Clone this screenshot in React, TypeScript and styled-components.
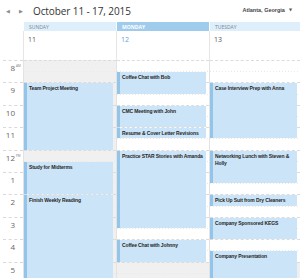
import React from "react";
import styled, { createGlobalStyle } from "styled-components";

const HOUR = 22.4;
const FIRST_HOUR = 8;
const HOURS = [8, 9, 10, 11, 12, 1, 2, 3, 4, 5];

interface CalEvent {
  title: string;
  start: number;
  end: number;
}

interface Day {
  name: string;
  date: number;
  today?: boolean;
  weekend?: boolean;
  events: CalEvent[];
}

const days: Day[] = [
  {
    name: "Sunday",
    date: 11,
    weekend: true,
    events: [
      { title: "Team Project Meeting", start: 9, end: 12 },
      { title: "Study for Midterms", start: 12.5, end: 14 },
      { title: "Finish Weekly Reading", start: 14, end: 18 },
    ],
  },
  {
    name: "Monday",
    date: 12,
    today: true,
    events: [
      { title: "Coffee Chat with Bob", start: 8.5, end: 9.5 },
      { title: "CMC Meeting with John", start: 10, end: 11 },
      { title: "Resume & Cover Letter Revisions", start: 11, end: 11.5 },
      { title: "Practice STAR Stories with Amanda", start: 12, end: 15.5 },
      { title: "Coffee Chat with Johnny", start: 16, end: 17 },
    ],
  },
  {
    name: "Tuesday",
    date: 13,
    events: [
      { title: "Case Interview Prep with Anna", start: 9, end: 11.5 },
      { title: "Networking Lunch with Steven & Holly", start: 12, end: 13.5 },
      { title: "Pick Up Suit from Dry Cleaners", start: 14, end: 14.5 },
      { title: "Company Sponsored KEGS", start: 15, end: 16 },
      { title: "Company Presentation", start: 16.5, end: 18 },
    ],
  },
];

const GlobalStyle = createGlobalStyle`
  html, body {
    margin: 0;
    padding: 0;
    background: #fff;
  }
  body {
    font-family: "Open Sans", "Liberation Sans", sans-serif;
  }
`;

const Page = styled.div`
  width: 300px;
  height: 278px;
  overflow: hidden;
  background: #fff;
`;

const Toolbar = styled.div`
  height: 22px;
  display: flex;
  align-items: center;
  padding-left: 6px;
  padding-right: 8px;
`;

const Arrow = styled.span`
  font-family: "DejaVu Sans", sans-serif;
  font-size: 5px;
  color: #8a8a8a;
  width: 13px;
  line-height: 1;
`;

const Title = styled.h1`
  margin: 0 0 0 1px;
  font-size: 10px;
  font-weight: 400;
  color: #333;
  letter-spacing: -0.1px;
`;

const Location = styled.div`
  margin-left: auto;
  display: flex;
  align-items: center;
  gap: 4px;
  font-family: "Liberation Sans", sans-serif;
  font-size: 5.5px;
  font-weight: 700;
  color: #444;
  margin-top: -3px;
`;

const Caret = styled.span`
  font-family: "DejaVu Sans", sans-serif;
  font-size: 4px;
  color: #555;
`;

const Grid = styled.div`
  display: grid;
  grid-template-columns: 23px 93px 93px 1fr;
`;

const Corner = styled.div``;

const DayHead = styled.div<{ $today?: boolean }>`
  height: 9px;
  display: flex;
  align-items: center;
  padding-left: 5px;
  background: ${(p) => (p.$today ? "#9fcbed" : "#deeefa")};
  color: ${(p) => (p.$today ? "#fff" : "#7d8893")};
  font-size: 5px;
  font-weight: ${(p) => (p.$today ? 700 : 400)};
  text-transform: uppercase;
  border-left: 1px solid #fff;
`;

const DateCell = styled.div<{ $today?: boolean }>`
  height: 29px;
  padding: 4px 0 0 4px;
  box-sizing: border-box;
  font-size: 7px;
  color: ${(p) => (p.$today ? "#5ea3de" : "#555")};
  border-left: 1px solid #e6e6e6;
`;

const Gutter = styled.div`
  display: flex;
  flex-direction: column;
`;

const HourLabel = styled.div`
  height: ${HOUR}px;
  box-sizing: border-box;
  margin-left: 3px;
  border-top: 1px dashed #d9d9d9;
  display: flex;
  justify-content: flex-end;
  padding-top: 2px;
`;

const HourNum = styled.span`
  font-size: 8px;
  color: #666;
  width: 11px;
  text-align: right;
  line-height: 10px;
`;

const Meridiem = styled.span`
  font-size: 3px;
  color: #777;
  width: 7px;
  padding-left: 1px;
  line-height: 6px;
`;

const DayCol = styled.div<{ $weekend?: boolean }>`
  position: relative;
  border-left: 1px solid #e3e3e3;
  background: ${(p) => (p.$weekend ? "#f0f0f0" : "#fff")};
  height: 218px;
  overflow: hidden;
`;

const Slot = styled.div<{ $off?: boolean }>`
  height: ${HOUR}px;
  box-sizing: border-box;
  border-top: 1px dashed #dcdcdc;
  background: ${(p) => (p.$off ? "#f0f0f0" : "transparent")};
  background-image: linear-gradient(to right, #e8e8e8 50%, transparent 50%);
  background-size: 3px 1px;
  background-repeat: repeat-x;
  background-position: 0 ${HOUR / 2 - 1}px;
`;

const EventBox = styled.div`
  position: absolute;
  left: 0;
  right: 3px;
  box-sizing: border-box;
  background: #cbe4f7;
  border-left: 3px solid #93c4ea;
  padding: 2px 2px 0 2px;
  font-family: "Liberation Sans", sans-serif;
  font-size: 5px;
  font-weight: 700;
  letter-spacing: -0.12px;
  line-height: 7px;
  color: #262626;
  overflow: hidden;
`;

export default function App() {
  return (
    <Page>
      <GlobalStyle />
      <Toolbar>
        <Arrow>◀</Arrow>
        <Arrow>▶</Arrow>
        <Title>October 11 - 17, 2015</Title>
        <Location>
          Atlanta, Georgia
          <Caret>▼</Caret>
        </Location>
      </Toolbar>
      <Grid>
        <Corner />
        {days.map((d) => (
          <DayHead key={d.name} $today={d.today}>
            {d.name}
          </DayHead>
        ))}
        <Corner />
        {days.map((d) => (
          <DateCell key={d.name} $today={d.today}>
            {d.date}
          </DateCell>
        ))}
        <Gutter>
          {HOURS.map((h) => (
            <HourLabel key={h}>
              <HourNum>{h}</HourNum>
              <Meridiem>{h === 8 ? "AM" : h === 12 ? "PM" : ""}</Meridiem>
            </HourLabel>
          ))}
        </Gutter>
        {days.map((d) => (
          <DayCol key={d.name} $weekend={d.weekend}>
            {HOURS.map((h, i) => (
              <Slot key={h} $off={!d.weekend && FIRST_HOUR + i >= 17} />
            ))}
            {d.events.map((e) => (
              <EventBox
                key={e.title}
                style={{
                  top: (e.start - FIRST_HOUR) * HOUR + 1,
                  height: (e.end - e.start) * HOUR - 1,
                }}
              >
                {e.title}
              </EventBox>
            ))}
          </DayCol>
        ))}
      </Grid>
    </Page>
  );
}
